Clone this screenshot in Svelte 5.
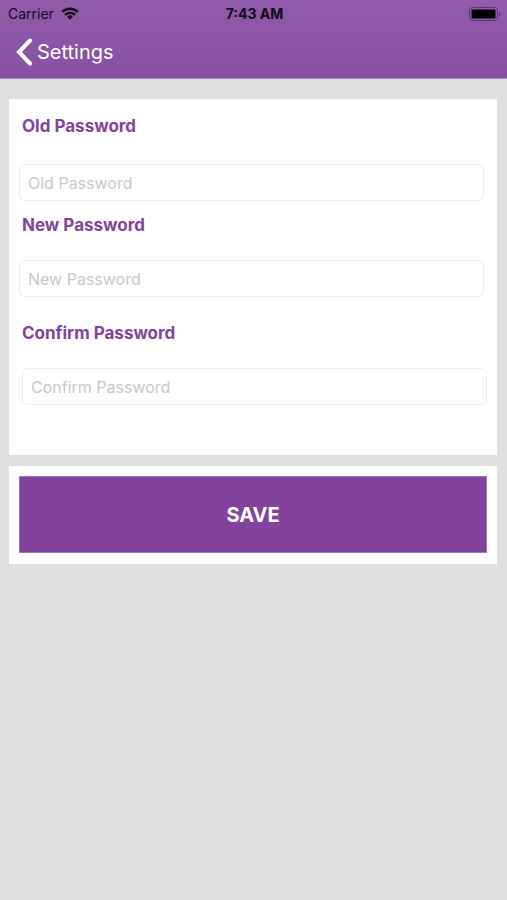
<script>
	let oldPassword = '';
	let newPassword = '';
	let confirmPassword = '';

	function save() {
		if (newPassword !== confirmPassword) {
			alert('Passwords do not match');
			return;
		}
		oldPassword = '';
		newPassword = '';
		confirmPassword = '';
	}
</script>

<header>
	<div class="status">
		<div class="carrier">
			<span>Carrier</span>
			<svg class="wifi" viewBox="0 0 18 13" aria-hidden="true">
				<path d="M1.2 4.9a11.2 11.2 0 0 1 15.6 0" />
				<path d="M4 7.9a7.2 7.2 0 0 1 10 0" />
				<path class="dot" d="M9 12.8 6 9.8a4.3 4.3 0 0 1 6 0z" />
			</svg>
		</div>
		<span class="time">7:43 AM</span>
		<svg class="battery" viewBox="0 0 32 14" aria-hidden="true">
			<rect class="shell" x="0.5" y="0.5" width="28" height="13" rx="3" />
			<rect x="2.5" y="2.5" width="24" height="9" rx="1" />
			<path class="tip" d="M30 4.8c2 .8 2 3.6 0 4.4z" />
		</svg>
	</div>
	<nav>
		<a href="/settings">
			<svg class="back" viewBox="0 0 16 28" aria-hidden="true">
				<path d="M14 2.5 3 14l11 11.5" />
			</svg>
			<span>Settings</span>
		</a>
	</nav>
</header>

<form on:submit|preventDefault={save}>
	<section class="card fields">
		<div class="field">
			<label for="old">Old Password</label>
			<input id="old" type="password" placeholder="Old Password" bind:value={oldPassword} />
		</div>
		<div class="field new">
			<label for="new">New Password</label>
			<input id="new" type="password" placeholder="New Password" bind:value={newPassword} />
		</div>
		<div class="field confirm">
			<label for="confirm">Confirm Password</label>
			<input id="confirm" type="password" placeholder="Confirm Password" bind:value={confirmPassword} />
		</div>
	</section>
	<section class="card actions">
		<button type="submit">SAVE</button>
	</section>
</form>

<style>
	:global(body) {
		background: #e0e0e0;
		font-family: Inter, 'Liberation Sans', sans-serif;
	}

	header {
		background: linear-gradient(#915aab, #864fa0);
		border-bottom: 1px solid #a888b8;
		box-sizing: border-box;
		padding-bottom: 6px;
	}

	.status {
		display: grid;
		grid-template-columns: 1fr auto 1fr;
		align-items: center;
		height: 27px;
		padding: 0 6px 0 8px;
		font-size: 14px;
		color: #120a18;
	}

	.carrier {
		display: flex;
		align-items: center;
		gap: 7px;
	}

	.wifi {
		width: 18px;
		height: 13px;
		fill: none;
		stroke: #120a18;
		stroke-width: 2.4;
	}

	.wifi .dot {
		fill: #120a18;
		stroke: none;
	}

	.time {
		font-weight: 700;
	}

	.battery {
		width: 32px;
		height: 14px;
		justify-self: end;
		fill: #000;
	}

	.battery .shell {
		fill: none;
		stroke: #5a3070;
	}

	.battery .tip {
		fill: #5a3070;
	}

	nav {
		display: flex;
		align-items: center;
		height: 45px;
		padding: 4px 16px 0;
		box-sizing: border-box;
	}

	nav a {
		display: flex;
		align-items: center;
		gap: 5px;
		font-size: 20px;
		color: #fff;
		text-decoration: none;
	}

	.back {
		width: 16px;
		height: 28px;
		fill: none;
		stroke: #fff;
		stroke-width: 4;
		stroke-linecap: round;
	}

	form {
		display: flex;
		flex-direction: column;
		gap: 11px;
		padding: 20px 10px 0 9px;
	}

	.card {
		background: #fff;
	}

	.fields {
		padding: 17px 13px 50px 10px;
	}

	.field {
		display: flex;
		flex-direction: column;
		gap: 28px;
	}

	.new {
		margin-top: 14px;
		gap: 25px;
	}

	.confirm {
		margin: 26px -3px 0 3px;
		gap: 25px;
	}

	label {
		padding-left: 3px;
		font-size: 17px;
		font-weight: 700;
		line-height: 20px;
		color: #8043a0;
	}

	.confirm label {
		padding-left: 0;
	}

	input {
		width: 100%;
		height: 37px;
		box-sizing: border-box;
		padding: 0 8px;
		border: 1px solid #ececec;
		border-radius: 6px;
		background: #fff;
		font: inherit;
		font-size: 16px;
		color: #333;
	}

	input::placeholder {
		color: #c8c8c8;
		opacity: 1;
	}

	.actions {
		padding: 10px 10px 11px;
	}

	button {
		display: block;
		width: 100%;
		height: 77px;
		border: 1px solid #a473ba;
		background: #82429e;
		font: inherit;
		font-size: 20px;
		font-weight: 700;
		color: #fff;
		cursor: pointer;
	}
</style>
